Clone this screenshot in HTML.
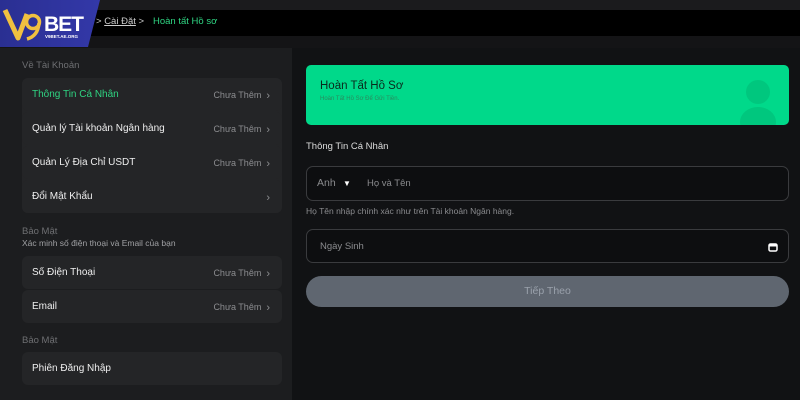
<!DOCTYPE html>
<html><head><meta charset="utf-8"><style>
*{margin:0;padding:0;box-sizing:border-box}
body{width:800px;height:400px;overflow:hidden;background:#111214;font-family:"Liberation Sans",sans-serif;position:relative}
.top{position:absolute;left:0;top:0;width:800px;height:10px;background:#1b1b1d}
.bc{position:absolute;left:0;top:10px;width:800px;height:26px;background:#000}
.bc span{position:absolute;top:6px;font-size:9.5px;color:#ccc}
.gap{position:absolute;left:0;top:36px;width:800px;height:12px;background:#141416}
.lp{position:absolute;left:0;top:48px;width:292px;height:352px;background:#1c1d1f}
.lbl{position:absolute;left:22px;font-size:9.5px;color:#6e6f72}
.row{position:absolute;left:22px;width:260px;height:33px;background:#242527;border-radius:6px}
.row b{position:absolute;left:10px;top:11px;font-size:10px;font-weight:normal;color:#eee}
.row i{position:absolute;right:12px;top:11px;font-size:9px;font-style:normal;color:#8c8d90}
.row i em{font-style:normal;font-size:11px;position:relative;top:1px}
.grp{position:absolute;left:22px;width:260px;background:#242527;border-radius:6px}
.logo{position:absolute;left:0;top:0;width:100px;height:47px;background:linear-gradient(90deg,#2a2f92,#3338a8);clip-path:polygon(0 0,100px 0,88px 47px,0 47px)}
</style></head><body>
<div class="top"></div>
<div class="bc"><span style="left:96px">&gt; <u>Cài Đặt</u> &gt;</span><span style="left:153px;color:#2fd482">Hoàn tất Hồ sơ</span></div>
<div class="gap"></div>
<div class="lp"></div>
<div class="logo">
<svg width="100" height="47" style="position:absolute;left:0;top:0">
<path d="M5 10 L18 38 L27 14" fill="none" stroke="#f0c040" stroke-width="5" stroke-linejoin="round"/>
<circle cx="33" cy="22" r="6.5" fill="none" stroke="#f0c040" stroke-width="3.5"/>
<path d="M39 23 Q38 36 27 39" fill="none" stroke="#f0c040" stroke-width="3.5"/>
<text x="44" y="31" font-family="Liberation Sans" font-weight="bold" font-size="21" fill="#fff" textLength="40">BET</text>
<text x="45" y="38" font-family="Liberation Sans" font-weight="bold" font-size="4.5" fill="#fff">V9BET.AE.ORG</text>
</svg></div>

<div class="lbl" style="top:60px">Về Tài Khoản</div>
<div class="grp" style="top:78px;height:135px"></div>
<div class="row" style="top:78px"><b style="color:#2fd482">Thông Tin Cá Nhân</b><i>Chưa Thêm &nbsp;<em>›</em></i></div>
<div class="row" style="top:112px"><b>Quản lý Tài khoản Ngân hàng</b><i>Chưa Thêm &nbsp;<em>›</em></i></div>
<div class="row" style="top:146px"><b>Quản Lý Địa Chỉ USDT</b><i>Chưa Thêm &nbsp;<em>›</em></i></div>
<div class="row" style="top:180px"><b>Đổi Mật Khẩu</b><i><em>›</em></i></div>
<div class="lbl" style="top:226px">Bảo Mật</div>
<div class="lbl" style="top:238px;color:#a0a1a4;font-size:8.5px">Xác minh số điện thoại và Email của bạn</div>
<div class="row" style="top:256px"><b>Số Điện Thoại</b><i>Chưa Thêm &nbsp;<em>›</em></i></div>
<div class="row" style="top:290px"><b>Email</b><i>Chưa Thêm &nbsp;<em>›</em></i></div>
<div class="lbl" style="top:335px">Bảo Mật</div>
<div class="row" style="top:352px"><b>Phiên Đăng Nhập</b></div>

<div style="position:absolute;left:306px;top:65px;width:483px;height:60px;background:#00d98a;border-radius:5px;overflow:hidden">
<div style="position:absolute;left:14px;top:15px;font-size:11.5px;color:#0a2a1c">Hoàn Tất Hồ Sơ</div>
<div style="position:absolute;left:14px;top:31px;font-size:6px;color:#2a8a5e">Hoàn Tất Hồ Sơ Để Gửi Tiền.</div>
<div style="position:absolute;left:440px;top:15px;width:24px;height:24px;border-radius:50%;background:#00c77e"></div>
<div style="position:absolute;left:434px;top:42px;width:36px;height:30px;border-radius:50%;background:#00c77e"></div>
</div>
<div style="position:absolute;left:306px;top:141px;font-size:9.5px;color:#ddd">Thông Tin Cá Nhân</div>
<div style="position:absolute;left:306px;top:166px;width:483px;height:35px;border:1px solid #3a3b3e;border-radius:7px;background:#0d0e10">
<span style="position:absolute;left:10px;top:10px;font-size:10.5px;color:#8a8b8e">Anh</span>
<span style="position:absolute;left:36px;top:12px;font-size:8px;color:#fff">▼</span>
<span style="position:absolute;left:60px;top:11px;font-size:9.5px;color:#8a8b8e">Họ và Tên</span></div>
<div style="position:absolute;left:306px;top:206px;font-size:8.5px;color:#8a8b8e">Họ Tên nhập chính xác như trên Tài khoản Ngân hàng.</div>
<div style="position:absolute;left:306px;top:229px;width:483px;height:34px;border:1px solid #3a3b3e;border-radius:7px;background:#0d0e10">
<span style="position:absolute;left:13px;top:11px;font-size:9.5px;color:#8a8b8e">Ngày Sinh</span>
<svg width="10" height="10" style="position:absolute;right:10px;top:12px"><rect x="1" y="2" width="8" height="7" rx="1.5" fill="none" stroke="#fff" stroke-width="1.5"/><rect x="1" y="2" width="8" height="2.5" fill="#fff"/></svg></div>
<div style="position:absolute;left:306px;top:276px;width:483px;height:31px;border-radius:16px;background:#5f6670;text-align:center;line-height:31px;font-size:10.5px;color:#9aa1ab">Tiếp Theo</div>
</body></html>
